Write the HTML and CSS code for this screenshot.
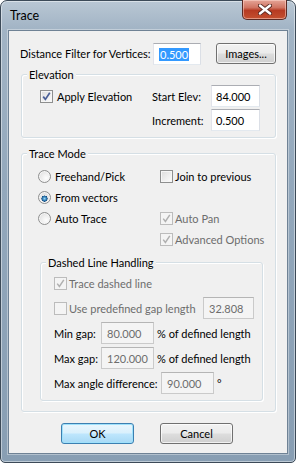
FILE: index.html
```html
<!DOCTYPE html>
<html lang="en">
<head>
    <meta charset="UTF-8">
    <title>Trace</title>
    <link rel="stylesheet" href="styles.css">
</head>
<body>
<!--dialog window-->
<div class="window">
    <div class="titlebar">
        <span class="title">Trace</span>
        <span class="close">
            <svg width="14" height="11" viewBox="0 0 14 11">
                <path d="M2 1.5 L12 9.5 M12 1.5 L2 9.5" stroke="#5a2a22" stroke-width="4.2" stroke-linecap="round"/>
                <path d="M2 1.5 L12 9.5 M12 1.5 L2 9.5" stroke="#fff" stroke-width="2.4" stroke-linecap="round"/>
            </svg>
        </span>
    </div>

    <div class="client">
        <!--distance filter-->
        <div class="toprow">
            <span class="lbl-dist">Distance Filter for Vertices:</span>
            <span class="field field-dist"><span class="hl">0.500</span></span>
            <span class="btn btn-images">Images...</span>
        </div>

        <!--elevation-->
        <div class="group grp-elev">
            <span class="legend">Elevation</span>
            <div class="elev-grid">
                <span class="check"><i class="box on"></i>Apply Elevation</span>
                <span class="lbl">Start Elev:</span>
                <span class="field field-elev">84.000</span>
                <span></span>
                <span class="lbl">Increment:</span>
                <span class="field field-elev">0.500</span>
            </div>
        </div>

        <!--trace mode-->
        <div class="group grp-trace">
            <span class="legend">Trace Mode</span>
            <div class="mode-grid">
                <span class="check"><i class="radio"></i>Freehand/Pick</span>
                <span class="check gap2"><i class="box"></i>Join to previous</span>
                <span class="check"><i class="radio on"></i>From vectors</span>
                <span></span>
                <span class="check"><i class="radio"></i>Auto Trace</span>
                <span class="check gap2 off"><i class="box on"></i>Auto Pan</span>
                <span></span>
                <span class="check gap2 off"><i class="box on"></i>Advanced Options</span>
            </div>

            <!--dashed lines-->
            <div class="group grp-dash">
                <span class="legend">Dashed Line Handling</span>
                <div class="dash-rows">
                    <div class="drow">
                        <span class="check gap2 off"><i class="box on"></i>Trace dashed line</span>
                    </div>
                    <div class="drow">
                        <span class="check gap2 off w-gap"><i class="box"></i>Use predefined gap length</span>
                        <span class="field off w51">32.808</span>
                    </div>
                    <div class="drow">
                        <span class="w47">Min gap:</span>
                        <span class="field off w53">80.000</span>
                        <span class="unit">% of defined length</span>
                    </div>
                    <div class="drow">
                        <span class="w47">Max gap:</span>
                        <span class="field off w53">120.000</span>
                        <span class="unit">% of defined length</span>
                    </div>
                    <div class="drow">
                        <span class="w107">Max angle difference:</span>
                        <span class="field off w53">90.000</span>
                        <span class="unit">°</span>
                    </div>
                </div>
            </div>
        </div>

        <!--dialog buttons-->
        <div class="buttons">
            <span class="btn btn-ok">OK</span>
            <span class="btn">Cancel</span>
        </div>
    </div>
</div>
</body>
</html>
```

FILE: styles.css
```css
* {
  box-sizing: border-box;
}
body {
  margin: 0;
  font-family: Lato, "Liberation Sans", sans-serif;
  font-size: 11px;
  color: #000;
  background: #fff;
  white-space: nowrap;
}
.window {
  width: 296px;
  height: 463px;
  padding: 0 7px 8px;
  border: 1px solid #3c4a58;
  border-radius: 7px 7px 5px 5px;
  background: linear-gradient(to bottom, #b9c7d4 0%, #a2b4c5 6%, #93a8bc 40%, #889eb3 100%);
  box-shadow: inset 0 0 0 1px rgba(255, 255, 255, 0.45);
}
.titlebar {
  height: 29px;
  display: flex;
  justify-content: space-between;
  align-items: flex-start;
}
.title {
  margin: 7px 0 0 2px;
  line-height: 15px;
  font-size: 12.5px;
}
.close {
  width: 45px;
  height: 20px;
  margin: -1px 1px 0 0;
  display: flex;
  align-items: center;
  justify-content: center;
  border: 1px solid #5b2a24;
  border-top: 0;
  border-radius: 0 0 5px 5px;
  background: linear-gradient(to bottom, #e5a597 0%, #d07462 40%, #b63a22 55%, #c4502f 100%);
  box-shadow: inset 0 0 0 1px rgba(255, 220, 210, 0.5);
}
.client {
  height: 424px;
  border: 1px solid #6f8295;
  background: #f0f0f0;
  box-shadow: 0 0 0 1px rgba(255, 255, 255, 0.35);
  overflow: hidden;
}

/* first row */
.toprow {
  display: flex;
  align-items: flex-start;
  margin-top: 12px;
  padding-left: 11px;
}
.lbl-dist {
  width: 133px;
  line-height: 22px;
}
.field {
  display: block;
  height: 22px;
  padding: 3px 0 0 4px;
  line-height: 15px;
  background: #fff;
  border: 1px solid;
  border-color: #abadb3 #dbdfe6 #e3e9ef #e2e3ea;
}
.field-dist {
  width: 48px;
  padding-left: 5px;
}
.hl {
  background: #3399ff;
  color: #fff;
  padding: 0 1px;
}
.btn {
  display: flex;
  align-items: center;
  justify-content: center;
  width: 73px;
  height: 21px;
  border: 1px solid #707070;
  border-radius: 3px;
  background: linear-gradient(to bottom, #f2f2f2 0%, #ebebeb 48%, #dddddd 52%, #cfcfcf 100%);
  box-shadow: inset 0 0 0 1px rgba(255, 255, 255, 0.7);
}
.btn-images {
  width: 60px;
  margin-left: 15px;
}
.btn-ok {
  border-color: #3c7fb1;
  background: linear-gradient(to bottom, #eaf6fd 0%, #d9f0fc 48%, #bee6fd 52%, #a7d9f5 100%);
  box-shadow: inset 0 0 0 1px #9fe1fb;
}

/* group boxes */
.group {
  width: 255px;
  margin-left: 12px;
  border: 1px solid #d5dfe5;
  border-radius: 3px;
  box-shadow: inset 1px 1px 0 #fff, 1px 1px 0 #fff;
}
.legend {
  display: block;
  width: fit-content;
  margin: -8px 0 0 5px;
  padding: 0 2px;
  line-height: 15px;
  background: #f0f0f0;
}
.grp-elev {
  margin-top: 9px;
}
.elev-grid {
  display: grid;
  grid-template-columns: 112px 59px 49px;
  grid-template-rows: 22px 22px;
  row-gap: 2px;
  align-items: center;
  margin: 3px 0 6px;
  padding-left: 18px;
}
.field-elev {
  width: 49px;
}
.grp-trace {
  margin-top: 15px;
  padding-bottom: 10px;
}
.mode-grid {
  display: grid;
  grid-template-columns: 122px auto;
  grid-auto-rows: 21px;
  align-items: center;
  margin-top: 5px;
  padding-left: 16px;
}

/* checkbox and radio */
.check {
  display: flex;
  align-items: center;
  gap: 4px;
}
.check.gap2 {
  gap: 2px;
}
.check.off {
  color: #6d6d6d;
}
.box, .radio {
  display: block;
  flex: none;
  width: 13px;
  height: 13px;
  border: 1px solid #8e8f8f;
  background: linear-gradient(135deg, #dcdcdc 0%, #f0f0f0 60%, #fcfcfc 100%);
  box-shadow: inset 0 0 0 1px #f6f6f6;
}
.box.on {
  background-image: url("data:image/svg+xml,%3Csvg xmlns='http://www.w3.org/2000/svg' width='11' height='11'%3E%3Cpath d='M2.2 5.6 L4.4 8.4 L8.8 1.8' fill='none' stroke='%234a5f97' stroke-width='1.7'/%3E%3C/svg%3E"), linear-gradient(135deg, #dcdcdc 0%, #f0f0f0 60%, #fcfcfc 100%);
}
.off .box {
  border-color: #bcbcbc;
  background: #f4f4f4;
  box-shadow: none;
}
.off .box.on {
  background: #f4f4f4 url("data:image/svg+xml,%3Csvg xmlns='http://www.w3.org/2000/svg' width='11' height='11'%3E%3Cpath d='M2.2 5.6 L4.4 8.4 L8.8 1.8' fill='none' stroke='%23b0b0b0' stroke-width='1.5'/%3E%3C/svg%3E");
}
.radio {
  border-radius: 50%;
  background: radial-gradient(circle at 65% 65%, #fdfdfd 0%, #ececec 50%, #d4d4d4 100%);
}
.radio.on {
  background: radial-gradient(circle at 50% 60%, #9fd8f5 0%, #2f7fb8 22%, #1b4f80 34%, #e9e9e9 38%, #d8d8d8 100%);
}

/* dashed group */
.grp-dash {
  width: 223px;
  margin: 12px 0 0 18px;
}
.dash-rows {
  display: flex;
  flex-direction: column;
  gap: 3px;
  margin: 2px 0 6px;
  padding-left: 13px;
}
.drow {
  display: flex;
  align-items: center;
  height: 22px;
}
.w-gap {
  width: 149px;
}
.w47 {
  width: 47px;
}
.w107 {
  width: 107px;
}
.w51 {
  width: 51px;
}
.w53 {
  width: 53px;
}
.field.off {
  color: #6d6d6d;
  background: #f4f4f4;
  border-color: #b5b5b5 #cacaca #cacaca #cacaca;
  padding-left: 5px;
}
.unit {
  margin-left: 3px;
}

/* ok / cancel */
.buttons {
  display: flex;
  gap: 26px;
  margin: 11px 0 0 52px;
}
```
